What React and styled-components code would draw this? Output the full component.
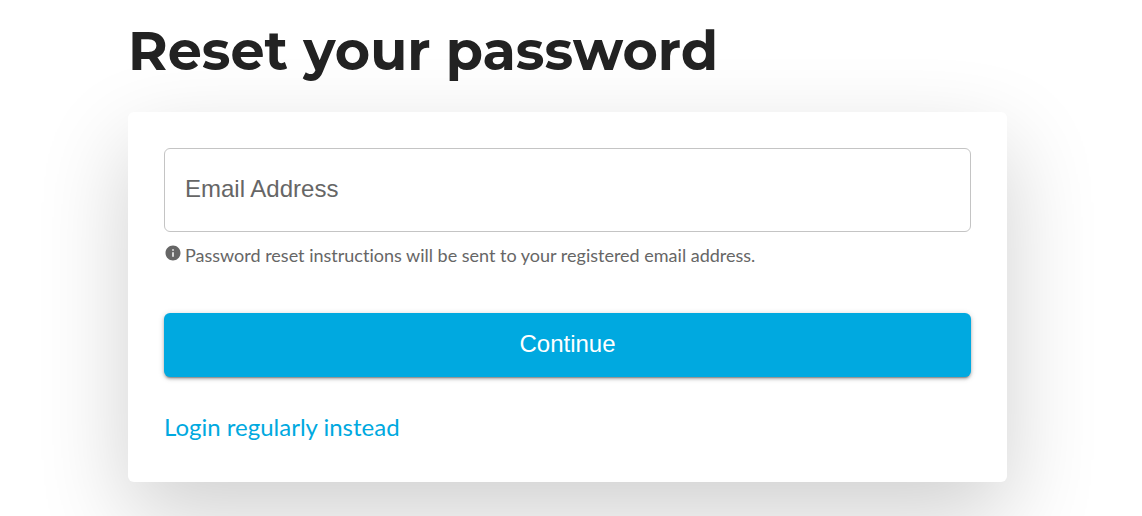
import React from "react";
import styled, { createGlobalStyle } from "styled-components";

const GlobalStyle = createGlobalStyle`
  *, *::before, *::after { box-sizing: border-box; }
  html { overflow: hidden; }
  body {
    margin: 0;
    background: #fff;
    color: #212121;
    font-family: Lato, "Liberation Sans", sans-serif;
    font-variant-ligatures: none;
  }
`;

const Page = styled.main`
  padding: 16px 135px 34px 128px;
`;

const Title = styled.h1`
  margin: 0 0 26px;
  font-family: Montserrat, Inter, sans-serif;
  font-size: 54px;
  line-height: 70px;
  font-weight: 700;
  color: #222;
`;

const Card = styled.form`
  display: flex;
  flex-direction: column;
  padding: 36px;
  background: #fff;
  border-radius: 6px;
  box-shadow: 0 34px 90px rgba(0, 0, 0, 0.19);
`;

const EmailInput = styled.input`
  width: 100%;
  height: 84px;
  padding: 0 20px 2px;
  border: 1px solid #c4c4c4;
  border-radius: 6px;
  background: #fff;
  color: #222;
  font-family: "Liberation Sans", Arial, sans-serif;
  font-size: 24px;

  &::placeholder {
    color: #666;
    opacity: 1;
  }
`;

const Hint = styled.p`
  display: flex;
  gap: 3px;
  margin: 12px 0 47px;
  color: #666;
  font-size: 18px;
  line-height: 22px;
`;

const InfoIcon = styled.svg`
  flex: none;
  width: 18px;
  height: 18px;
  fill: #666;
`;

const SubmitButton = styled.button`
  height: 64px;
  padding: 0 20px 2px;
  border: 0;
  border-radius: 6px;
  background: #00a9e0;
  color: #fff;
  font-family: "Liberation Sans", Arial, sans-serif;
  font-size: 24px;
  box-shadow:
    0 3px 1px -2px rgba(0, 0, 0, 0.2),
    0 2px 3px rgba(0, 0, 0, 0.24),
    0 1px 6px rgba(0, 0, 0, 0.16);
  cursor: pointer;
`;

const LoginLink = styled.a`
  align-self: flex-start;
  margin: 36px 0 6px;
  color: #00a9e0;
  font-size: 24px;
  line-height: 27px;
  text-decoration: none;
`;

export default function App() {
  return (
    <>
      <GlobalStyle />
      <Page>
        <Title>Reset your password</Title>
        <Card onSubmit={(event) => event.preventDefault()}>
          <EmailInput
            type="email"
            name="email"
            placeholder="Email Address"
            aria-label="Email Address"
            aria-describedby="email-hint"
          />
          <Hint id="email-hint">
            <InfoIcon viewBox="0 0 24 24" aria-hidden="true">
              <path d="M12 2C6.48 2 2 6.48 2 12s4.48 10 10 10 10-4.48 10-10S17.52 2 12 2zm1 15h-2v-6h2v6zm0-8h-2V7h2v2z" />
            </InfoIcon>
            <span>
              Password reset instructions will be sent to your registered email
              address.
            </span>
          </Hint>
          <SubmitButton type="submit">Continue</SubmitButton>
          <LoginLink href="#login">Login regularly instead</LoginLink>
        </Card>
      </Page>
    </>
  );
}
